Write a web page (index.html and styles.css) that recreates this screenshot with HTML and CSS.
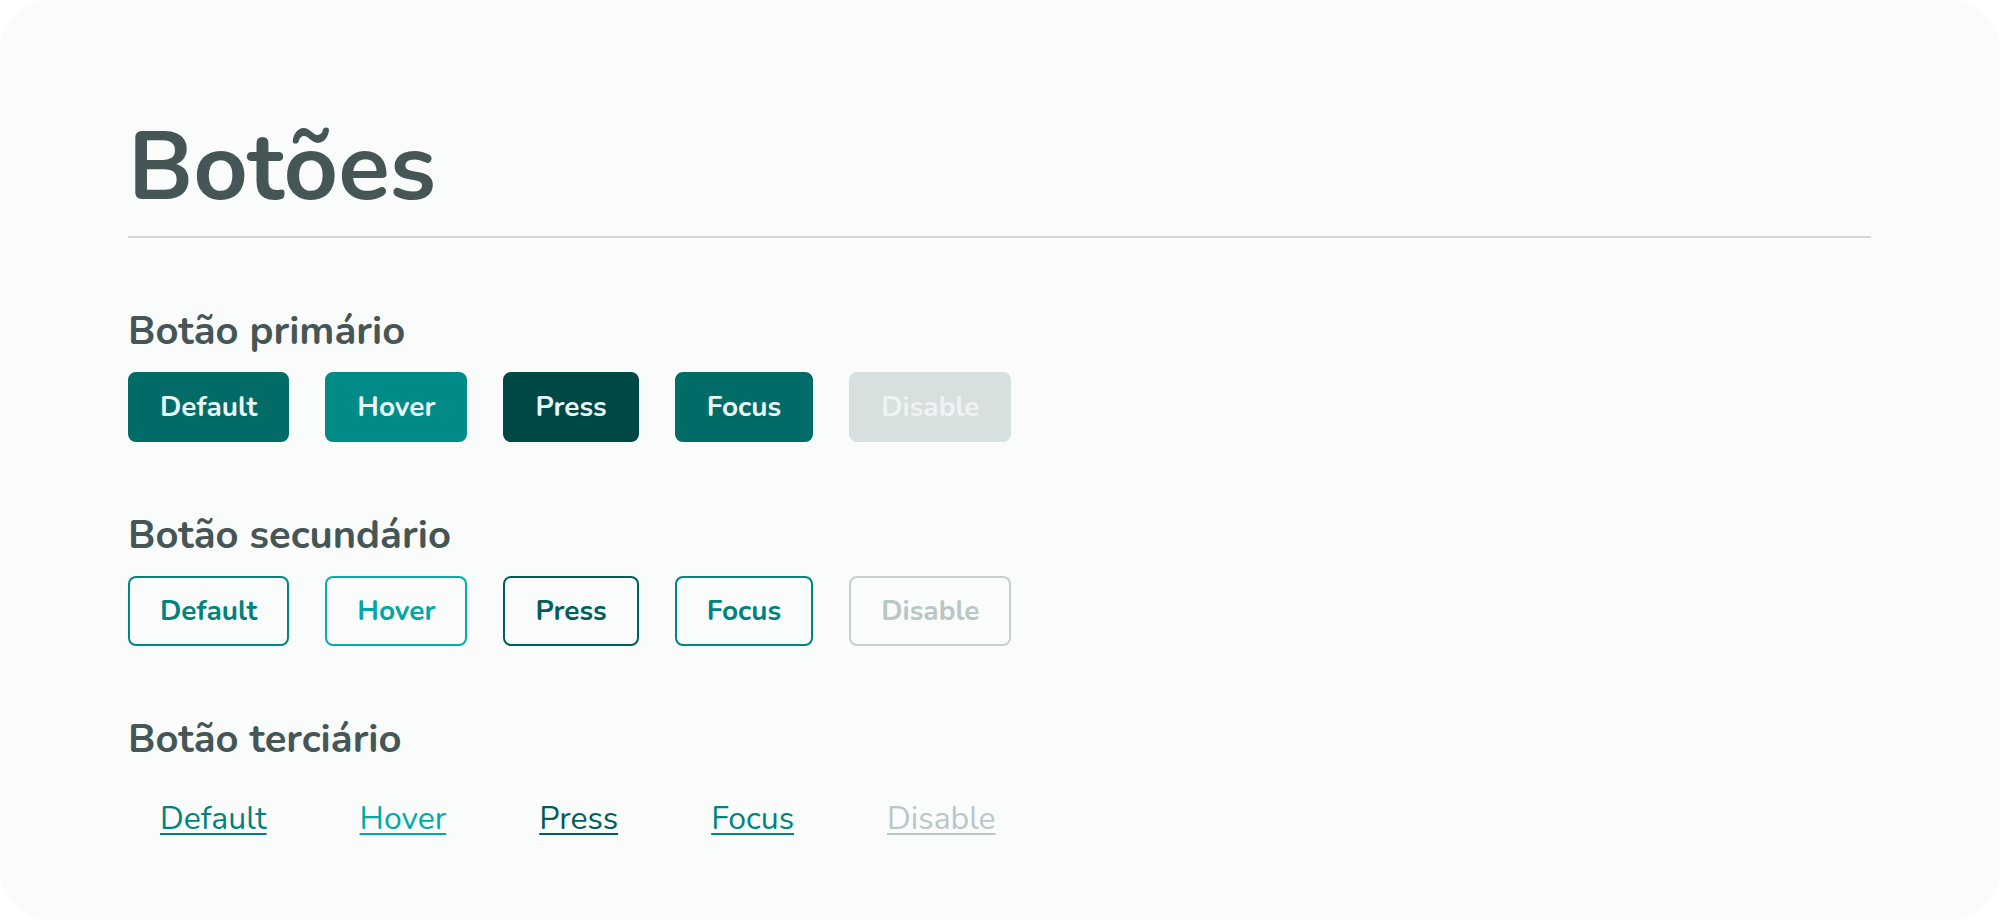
FILE: index.html
```html
<!DOCTYPE html>
<html lang="pt">
<head>
<meta charset="utf-8">
<title>Botões</title>
<link rel="stylesheet" href="styles.css">
</head>
<body>
<main class="card">
  <h1 class="title">Botões</h1>

  <section class="group">
    <h2 class="group-title">Botão primário</h2>
    <div class="row">
      <button class="btn primary">Default</button>
      <button class="btn primary hover">Hover</button>
      <button class="btn primary press">Press</button>
      <button class="btn primary focus">Focus</button>
      <button class="btn primary disabled">Disable</button>
    </div>
  </section>

  <section class="group">
    <h2 class="group-title">Botão secundário</h2>
    <div class="row">
      <button class="btn secondary">Default</button>
      <button class="btn secondary hover">Hover</button>
      <button class="btn secondary press">Press</button>
      <button class="btn secondary focus">Focus</button>
      <button class="btn secondary disabled">Disable</button>
    </div>
  </section>

  <section class="group">
    <h2 class="group-title">Botão terciário</h2>
    <div class="row links">
      <a class="link">Default</a>
      <a class="link hover">Hover</a>
      <a class="link press">Press</a>
      <a class="link focus">Focus</a>
      <a class="link disabled">Disable</a>
    </div>
  </section>
</main>
</body>
</html>
```

FILE: styles.css
```css
* { box-sizing: border-box; }

html, body {
  margin: 0;
  padding: 0;
  background: #ffffff;
}

body {
  font-family: "Nunito", "Lato", "Noto Sans", sans-serif;
  color: #465656;
}

.card {
  width: 2000px;
  height: 920px;
  background: #fafcfc;
  border-radius: 52px;
  padding: 121px 129px 0 128px;
  display: flex;
  flex-direction: column;
}

.title {
  margin: 0;
  font-size: 95px;
  line-height: 1;
  font-weight: 700;
  color: #465656;
  padding-bottom: 20px;
  border-bottom: 2px solid #d1d6d6;
}

.group {
  margin-top: 73px;
  display: flex;
  flex-direction: column;
  gap: 21px;
}

.group-title {
  margin: 0;
  font-size: 40px;
  line-height: 1;
  font-weight: 700;
  color: #465656;
}

.row {
  display: flex;
  gap: 36px;
  align-items: center;
}

.btn {
  font-family: inherit;
  font-size: 28px;
  line-height: 38px;
  font-weight: 700;
  padding: 14px 30px;
  border: 2px solid transparent;
  border-radius: 8px;
  background: transparent;
  cursor: pointer;
}

.btn.primary {
  background: #016b68;
  border-color: #016b68;
  color: #eaf6f5;
}
.btn.primary.hover { background: #008b88; border-color: #008b88; }
.btn.primary.press { background: #004846; border-color: #004846; }
.btn.primary.focus { background: #016b68; border-color: #016b68; }
.btn.primary.disabled { background: #d8dfdf; border-color: #d8dfdf; color: #eef3f3; }

.btn.secondary {
  border-color: #00857f;
  color: #00827d;
}
.btn.secondary.hover { border-color: #00aeab; color: #00a7a4; }
.btn.secondary.press { border-color: #005f5b; color: #005f5b; }
.btn.secondary.focus { border-color: #00857f; color: #00827d; }
.btn.secondary.disabled { border-color: #c5cfcf; color: #b9c6c6; }

.row.links {
  gap: 29px;
}

.link {
  display: inline-block;
  font-size: 32px;
  line-height: 38px;
  font-weight: 400;
  padding: 20px 32px 12px;
  color: #00827d;
  text-decoration: underline;
  text-decoration-thickness: 2px;
  text-underline-offset: 4px;
}
.link.hover { color: #00aaa7; }
.link.press { color: #005f5b; }
.link.focus { color: #00857f; }
.link.disabled { color: #bac7c7; }
```
